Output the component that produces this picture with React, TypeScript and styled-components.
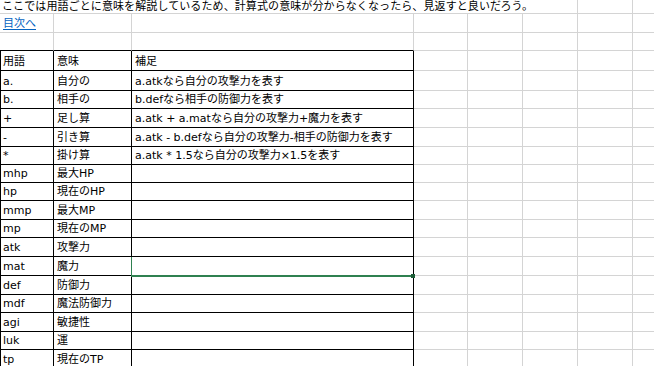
import React from "react";
import styled, { createGlobalStyle, css } from "styled-components";

const GlobalStyle = createGlobalStyle`
  html, body { margin: 0; padding: 0; background: #ffffff; }
  body {
    font-family: "DejaVu Sans", "Noto Sans CJK JP", sans-serif;
    overflow: hidden;
  }
`;

const GRID = "#d4d4d4";
const INK = "#000000";
const EXCEL_GREEN = "#2f8050";
const EXTRA_COLUMNS = 5;

const Sheet = styled.div`
  display: grid;
  grid-template-columns: 54px 78px 282px 54px 55px 55px 55px 55px;
  grid-template-rows:
    14px 19px 18px 20px
    20px 18px 19px 19px 18px
    18px 18px 19px 18px 19px
    19px 19px 18px 19px 18px 19px;
  width: 654px;
  height: 366px;
  overflow: hidden;
  background: #fff;
`;

const Cell = styled.div<{
  $table?: boolean;
  $edge?: boolean;
  $ruleBelow?: boolean;
  $span?: number;
}>`
  position: relative;
  box-sizing: border-box;
  min-width: 0;
  display: flex;
  align-items: flex-end;
  padding: 0 2px 2px 3px;
  border-right: 1px solid ${(p) => (p.$table ? INK : GRID)};
  border-bottom: 1px solid ${(p) => (p.$table || p.$ruleBelow ? INK : GRID)};
  ${(p) =>
    p.$edge &&
    css`
      border-left: 1px solid ${INK};
      padding-left: 2px;
    `}
  ${(p) =>
    p.$span &&
    css`
      grid-column: span ${p.$span};
    `}
  font-size: 11px;
  line-height: 13px;
  color: #000;
  white-space: nowrap;
`;

const IntroCell = styled(Cell)`
  padding-left: 2px;
  padding-bottom: 0;
  line-height: 12px;
  letter-spacing: 0.1px;
  overflow: visible;
`;

const Link = styled.a`
  color: #0563c1;
  text-decoration: underline;
  text-underline-offset: 2px;
  cursor: pointer;
`;

const Selection = styled.div`
  position: absolute;
  z-index: 2;
  left: -1px;
  top: 0;
  right: 0;
  bottom: -2px;
  border-left: 1px solid ${EXCEL_GREEN};
  border-bottom: 2px solid ${EXCEL_GREEN};
  pointer-events: none;
`;

const FillHandle = styled.div`
  position: absolute;
  right: -2px;
  bottom: -3px;
  width: 4px;
  height: 4px;
  background: #1d5c37;
`;

const rows: [string, string, string][] = [
  ["a.", "自分の", "a.atkなら自分の攻撃力を表す"],
  ["b.", "相手の", "b.defなら相手の防御力を表す"],
  ["+", "足し算", "a.atk + a.matなら自分の攻撃力+魔力を表す"],
  ["-", "引き算", "a.atk - b.defなら自分の攻撃力-相手の防御力を表す"],
  ["*", "掛け算", "a.atk * 1.5なら自分の攻撃力×1.5を表す"],
  ["mhp", "最大HP", ""],
  ["hp", "現在のHP", ""],
  ["mmp", "最大MP", ""],
  ["mp", "現在のMP", ""],
  ["atk", "攻撃力", ""],
  ["mat", "魔力", ""],
  ["def", "防御力", ""],
  ["mdf", "魔法防御力", ""],
  ["agi", "敏捷性", ""],
  ["luk", "運", ""],
  ["tp", "現在のTP", ""],
];

const SELECTED = "mat";

const Blanks = ({ count, prefix }: { count: number; prefix: string }) => (
  <>
    {Array.from({ length: count }, (_, i) => (
      <Cell key={`${prefix}-${i}`} />
    ))}
  </>
);

export default function App() {
  return (
    <>
      <GlobalStyle />
      <Sheet>
        {/* row 1 */}
        <IntroCell $span={6}>
          ここでは用語ごとに意味を解説しているため、計算式の意味が分からなくなったら、見返すと良いだろう。
        </IntroCell>
        <Blanks count={2} prefix="r1" />

        {/* row 2 */}
        <Cell>
          <Link>目次へ</Link>
        </Cell>
        <Blanks count={2 + EXTRA_COLUMNS} prefix="r2" />

        {/* row 3 */}
        <Cell $ruleBelow />
        <Cell $ruleBelow />
        <Cell $ruleBelow />
        <Blanks count={EXTRA_COLUMNS} prefix="r3" />

        {/* header */}
        <Cell $table $edge>用語</Cell>
        <Cell $table>意味</Cell>
        <Cell $table>補足</Cell>
        <Blanks count={EXTRA_COLUMNS} prefix="hd" />

        {rows.map(([term, meaning, note]) => (
          <React.Fragment key={term}>
            <Cell $table $edge>{term}</Cell>
            <Cell $table>{meaning}</Cell>
            <Cell $table>
              {note}
              {term === SELECTED && (
                <Selection>
                  <FillHandle />
                </Selection>
              )}
            </Cell>
            <Blanks count={EXTRA_COLUMNS} prefix={term} />
          </React.Fragment>
        ))}
      </Sheet>
    </>
  );
}
